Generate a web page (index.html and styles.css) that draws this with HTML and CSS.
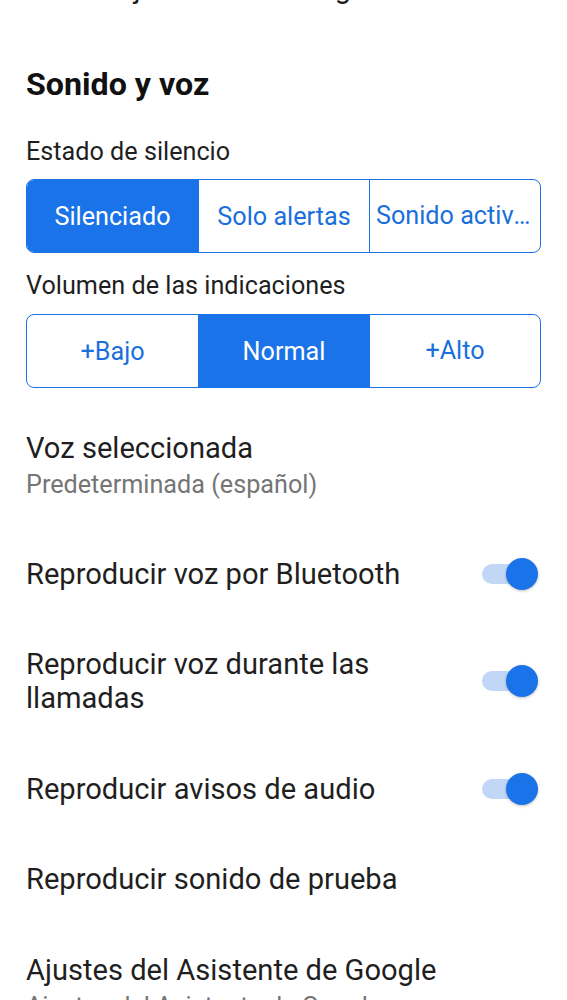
FILE: index.html
```html
<!DOCTYPE html>
<html lang="es">
<head>
<meta charset="utf-8">
<link rel="stylesheet" href="styles.css">
</head>
<body>
<div class="page">
  <div class="cut-line">Usar mejoras de la navegación</div>
  <h2 class="section-title">Sonido y voz</h2>

  <div class="label">Estado de silencio</div>
  <div class="segmented">
    <div class="seg selected">Silenciado</div>
    <div class="seg">Solo alertas</div>
    <div class="seg">Sonido activado</div>
  </div>

  <div class="label label-2">Volumen de las indicaciones</div>
  <div class="segmented segmented-2">
    <div class="seg">+Bajo</div>
    <div class="seg selected">Normal</div>
    <div class="seg">+Alto</div>
  </div>

  <div class="list">
    <div class="row">
      <div class="row-text">
        <div class="title">Voz seleccionada</div>
        <div class="subtitle">Predeterminada (español)</div>
      </div>
    </div>
    <div class="row">
      <div class="row-text"><div class="title">Reproducir voz por Bluetooth</div></div>
      <div class="switch"><span class="track"></span><span class="thumb"></span></div>
    </div>
    <div class="row">
      <div class="row-text"><div class="title">Reproducir voz durante las llamadas</div></div>
      <div class="switch"><span class="track"></span><span class="thumb"></span></div>
    </div>
    <div class="row">
      <div class="row-text"><div class="title">Reproducir avisos de audio</div></div>
      <div class="switch"><span class="track"></span><span class="thumb"></span></div>
    </div>
    <div class="row">
      <div class="row-text"><div class="title">Reproducir sonido de prueba</div></div>
    </div>
    <div class="row">
      <div class="row-text">
        <div class="title">Ajustes del Asistente de Google</div>
        <div class="subtitle">Ajustes del Asistente de Google</div>
      </div>
    </div>
  </div>
</div>
</body>
</html>
```

FILE: styles.css
```css
* { box-sizing: border-box; }
html, body {
  margin: 0;
  padding: 0;
  background: #ffffff;
}
body {
  font-family: Roboto, "Noto Sans", Arial, sans-serif;
  color: #1f1f1f;
  overflow: hidden;
  height: 1000px;
}
.page {
  padding: 0 26px;
}
.cut-line {
  font-size: 29.1px;
  line-height: 34px;
  margin-top: -29px;
  white-space: nowrap;
}
.section-title {
  font-size: 32.2px;
  font-weight: 700;
  line-height: 40px;
  margin: 59px 0 0 0;
  color: #111111;
}
.label {
  font-size: 25.2px;
  line-height: 30px;
  margin-top: 33px;
  color: #1f1f1f;
}
.label-2 {
  margin-top: 18px;
}
.segmented {
  margin-top: 12px;
  height: 74px;
  display: grid;
  grid-template-columns: 1fr 1fr 1fr;
  border: 1.5px solid #1a73e8;
  border-radius: 8px;
  overflow: hidden;
}
.segmented-2 {
  margin-top: 13px;
}
.seg {
  display: flex;
  align-items: center;
  justify-content: center;
  font-size: 25.2px;
  color: #1a6fdc;
  padding: 0 6px;
  white-space: nowrap;
  overflow: hidden;
  text-overflow: ellipsis;
  border-left: 1.5px solid #1a73e8;
  min-width: 0;
}
.seg:first-child { border-left: none; }
.seg.selected {
  background: #1a73e8;
  color: #ffffff;
}
.seg:nth-child(3) {
  display: block;
  line-height: 71px;
  text-align: center;
}
.list {
  margin-top: 15px;
}
.row {
  display: flex;
  align-items: center;
  justify-content: space-between;
  padding: 28.25px 0;
}
.row-text {
  flex: 1;
  min-width: 0;
  padding-right: 40px;
}
.title {
  font-size: 29.1px;
  line-height: 34px;
  color: #1f1f1f;
}
.subtitle {
  font-size: 25.2px;
  line-height: 30px;
  color: #757575;
  margin-top: 5px;
}
.switch {
  position: relative;
  width: 56px;
  height: 32px;
  flex: none;
  margin-right: 3px;
}
.track {
  position: absolute;
  left: 0;
  top: 6px;
  width: 50px;
  height: 20px;
  border-radius: 10px;
  background: #c2d6f6;
}
.thumb {
  position: absolute;
  right: 0;
  top: 0;
  width: 32px;
  height: 32px;
  border-radius: 50%;
  background: #1a73e8;
  box-shadow: 0 1px 3px rgba(0, 0, 0, 0.25);
}
```
